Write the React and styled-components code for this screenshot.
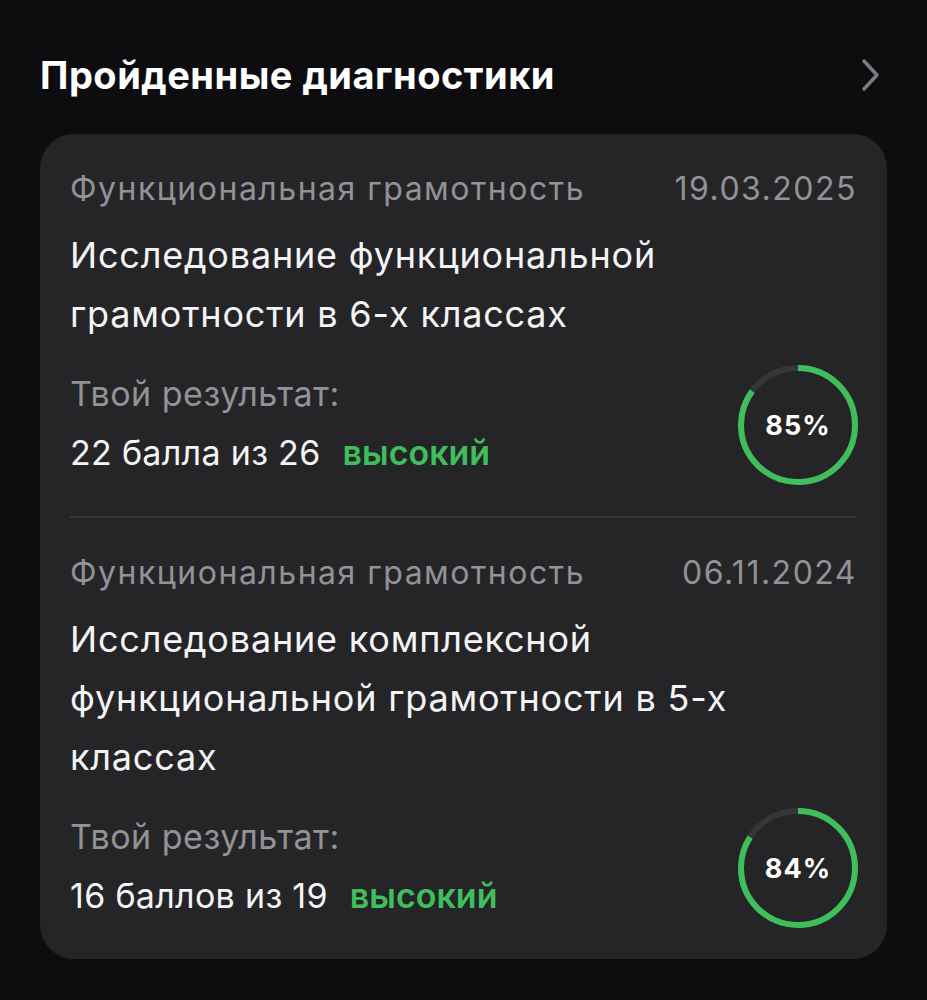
import React from 'react';
import styled, { createGlobalStyle } from 'styled-components';

const GlobalStyle = createGlobalStyle`
    html, body {
        margin: 0;
        padding: 0;
        background: #0d0d0f;
    }
    body {
        font-family: Inter, "Noto Sans", sans-serif;
        color: #f4f4f6;
    }
`;

const Page = styled.div`
    width: 927px;
    min-height: 1000px;
    box-sizing: border-box;
    padding: 51px 40px 40px;
    background: #0d0d0f;
`;

const Header = styled.div`
    display: flex;
    align-items: center;
    justify-content: space-between;
    height: 48px;
    margin-bottom: 35px;
`;

const HeaderTitle = styled.h2`
    margin: 0;
    font-size: 38px;
    font-weight: 700;
    letter-spacing: 0.5px;
    color: #ffffff;
`;

const Chevron = styled.svg`
    width: 22px;
    height: 34px;
    margin-right: 5px;
`;

const Card = styled.div`
    background: #252527;
    border-radius: 34px;
    padding: 0 30px 0 30px;
`;

const Section = styled.section`
    padding: 35px 0 30px;
    border-top: ${p => (p.first ? 'none' : '2px solid #38383b')};
`;

const MetaRow = styled.div`
    display: flex;
    justify-content: space-between;
    align-items: center;
    font-size: 32px;
    line-height: 40px;
    letter-spacing: 1.5px;
    color: #929297;
`;

const Title = styled.div`
    margin-top: 17px;
    font-size: 36px;
    line-height: 59px;
    letter-spacing: 0.8px;
    color: #f4f4f6;
`;

const ResultRow = styled.div`
    display: flex;
    align-items: flex-start;
    justify-content: space-between;
    margin-top: 20px;
`;

const ResultText = styled.div`
    font-size: 34px;
    line-height: 59px;
`;

const ResultLabel = styled.div`
    color: #929297;
    letter-spacing: 0.5px;
`;

const Score = styled.div`
    color: #f4f4f6;
    letter-spacing: 0.3px;
`;

const Level = styled.span`
    margin-left: 22px;
    color: #3fbe5c;
    font-weight: 600;
    letter-spacing: 0;
`;

const RingWrap = styled.div`
    position: relative;
    width: 122px;
    height: 122px;
    margin-right: -2px;
`;

const RingLabel = styled.div`
    position: absolute;
    inset: 0;
    display: flex;
    align-items: center;
    justify-content: center;
    font-size: 27px;
    font-weight: 700;
    letter-spacing: 1px;
    color: #ffffff;
`;

const ProgressRing = ({ value }) => {
    const r = 57;
    const c = 2 * Math.PI * r;
    return (
        <RingWrap>
            <svg width="122" height="122" viewBox="0 0 122 122">
                <circle cx="61" cy="61" r={r} fill="none" stroke="#363638" strokeWidth="6" />
                <circle
                    cx="61"
                    cy="61"
                    r={r}
                    fill="none"
                    stroke="#3fbe5c"
                    strokeWidth="6"
                    strokeDasharray={`${(c * value) / 100} ${c}`}
                    transform="rotate(-90 61 61)"
                />
            </svg>
            <RingLabel>{value}%</RingLabel>
        </RingWrap>
    );
};

const items = [
    {
        category: 'Функциональная грамотность',
        date: '19.03.2025',
        title: ['Исследование функциональной', 'грамотности в 6-х классах'],
        score: '22 балла из 26',
        level: 'высокий',
        percent: 85,
    },
    {
        category: 'Функциональная грамотность',
        date: '06.11.2024',
        title: ['Исследование комплексной', 'функциональной грамотности в 5-х', 'классах'],
        score: '16 баллов из 19',
        level: 'высокий',
        percent: 84,
    },
];

const App = () => {
    return (
        <Page>
            <GlobalStyle />
            <Header>
                <HeaderTitle>Пройденные диагностики</HeaderTitle>
                <Chevron viewBox="0 0 22 34">
                    <polyline
                        points="4,3 17,17 4,31"
                        fill="none"
                        stroke="#7b7b80"
                        strokeWidth="3.5"
                        strokeLinecap="round"
                        strokeLinejoin="round"
                    />
                </Chevron>
            </Header>
            <Card>
                {items.map((item, i) => (
                    <Section key={i} first={i === 0}>
                        <MetaRow>
                            <span>{item.category}</span>
                            <span>{item.date}</span>
                        </MetaRow>
                        <Title>
                            {item.title.map((line, j) => (
                                <div key={j}>{line}</div>
                            ))}
                        </Title>
                        <ResultRow>
                            <ResultText>
                                <ResultLabel>Твой результат:</ResultLabel>
                                <Score>
                                    {item.score}
                                    <Level>{item.level}</Level>
                                </Score>
                            </ResultText>
                            <ProgressRing value={item.percent} />
                        </ResultRow>
                    </Section>
                ))}
            </Card>
        </Page>
    );
};

export default App;
